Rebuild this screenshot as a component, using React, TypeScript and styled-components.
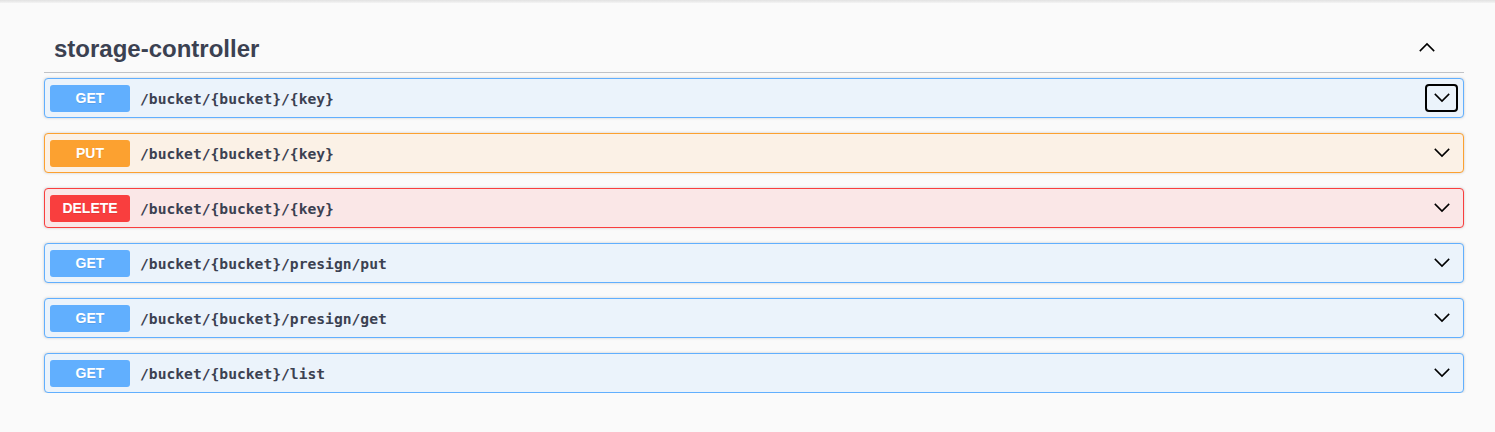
import React from "react";
import styled, { createGlobalStyle } from "styled-components";

const Global = createGlobalStyle`
  html, body { margin: 0; padding: 0; background: #fafafa; }
  body { font-family: "Liberation Sans", Arial, sans-serif; color: #3b4151; }
`;

const TopEdge = styled.div`
  height: 3px;
  background: linear-gradient(#e2e2e2, #ececec 60%, #f4f4f4);
`;

const Wrapper = styled.div`
  width: 1420px;
  margin-left: 44px;
  padding-top: 22px;
`;

const TagHeader = styled.h3`
  display: flex;
  align-items: center;
  justify-content: space-between;
  margin: 0 0 5px;
  height: 47px;
  padding: 0 20px 0 10px;
  border-bottom: 1px solid rgba(59, 65, 81, 0.3);
  font-size: 24px;
  font-weight: 700;
  color: #3b4151;
`;

const HeaderToggle = styled.span`
  display: flex;
  margin-right: 7px;
  margin-top: -2px;
`;

type Kind = "get" | "put" | "delete";

const palette: Record<Kind, { main: string; bg: string }> = {
  get: { main: "#61affe", bg: "#ebf3fb" },
  put: { main: "#fca130", bg: "#fbf1e6" },
  delete: { main: "#f93e3e", bg: "#fae7e7" },
};

const List = styled.div`
  display: flex;
  flex-direction: column;
  gap: 15px;
`;

const OpBlock = styled.div<{ $kind: Kind }>`
  display: flex;
  align-items: center;
  height: 40px;
  box-sizing: border-box;
  padding: 0 5px;
  border: 1px solid ${(p) => palette[p.$kind].main};
  background: ${(p) => palette[p.$kind].bg};
  border-radius: 4px;
  box-shadow: 0 0 3px rgba(0, 0, 0, 0.19);
`;

const Method = styled.span<{ $kind: Kind }>`
  display: flex;
  align-items: center;
  justify-content: center;
  width: 80px;
  height: 27px;
  border-radius: 3px;
  background: ${(p) => palette[p.$kind].main};
  color: #fff;
  font-size: 14px;
  font-weight: 700;
  text-shadow: 0 1px 0 rgba(0, 0, 0, 0.1);
`;

const Path = styled.span`
  flex: 1;
  padding-left: 10px;
  font-family: "DejaVu Sans Mono", monospace;
  font-size: 14.65px;
  font-weight: 700;
  color: #3b4151;
`;

const Toggle = styled.span<{ $focused?: boolean }>`
  display: flex;
  align-items: center;
  justify-content: center;
  width: 33px;
  height: 28px;
  box-sizing: border-box;
  border: 2px solid ${(p) => (p.$focused ? "#000" : "transparent")};
  border-radius: 4px;
`;

const Chevron = ({ up }: { up?: boolean }) => (
  <svg width="20" height="20" viewBox="0 0 20 20">
    <path
      d={up ? "M2 14 L10 6 L18 14" : "M2 6 L10 14 L18 6"}
      fill="none"
      stroke="#000"
      strokeWidth="1.7"
      transform="translate(1 0.5) scale(0.9)"
    />
  </svg>
);

const ops: { kind: Kind; path: string }[] = [
  { kind: "get", path: "/bucket/{bucket}/{key}" },
  { kind: "put", path: "/bucket/{bucket}/{key}" },
  { kind: "delete", path: "/bucket/{bucket}/{key}" },
  { kind: "get", path: "/bucket/{bucket}/presign/put" },
  { kind: "get", path: "/bucket/{bucket}/presign/get" },
  { kind: "get", path: "/bucket/{bucket}/list" },
];

export default function App() {
  return (
    <>
      <Global />
      <TopEdge />
      <Wrapper>
        <TagHeader>
          <span>storage-controller</span>
          <HeaderToggle>
            <Chevron up />
          </HeaderToggle>
        </TagHeader>
        <List>
          {ops.map((op, i) => (
            <OpBlock key={i} $kind={op.kind}>
              <Method $kind={op.kind}>{op.kind.toUpperCase()}</Method>
              <Path>{op.path}</Path>
              <Toggle $focused={i === 0}>
                <Chevron />
              </Toggle>
            </OpBlock>
          ))}
        </List>
      </Wrapper>
    </>
  );
}
